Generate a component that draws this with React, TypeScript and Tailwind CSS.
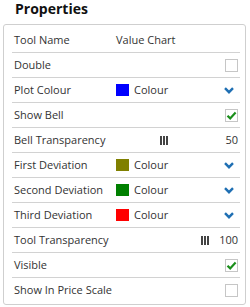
import React from "react";

type Row =
  | { kind: "text"; label: string; value: string }
  | { kind: "check"; label: string; checked: boolean }
  | { kind: "colour"; label: string; colour: string }
  | { kind: "slider"; label: string; value: number };

const rows: Row[] = [
  { kind: "text", label: "Tool Name", value: "Value Chart" },
  { kind: "check", label: "Double", checked: false },
  { kind: "colour", label: "Plot Colour", colour: "#0000ff" },
  { kind: "check", label: "Show Bell", checked: true },
  { kind: "slider", label: "Bell Transparency", value: 50 },
  { kind: "colour", label: "First Deviation", colour: "#808000" },
  { kind: "colour", label: "Second Deviation", colour: "#008000" },
  { kind: "colour", label: "Third Deviation", colour: "#ff0000" },
  { kind: "slider", label: "Tool Transparency", value: 100 },
  { kind: "check", label: "Visible", checked: true },
  { kind: "check", label: "Show In Price Scale", checked: false },
];

function Checkbox({ checked }: { checked: boolean }) {
  return (
    <div className="ml-auto mr-[2px] w-[13px] h-[13px] border border-[#c6c6c6] bg-white flex items-center justify-center">
      {checked && (
        <svg width="11" height="11" viewBox="0 0 11 11">
          <path d="M1.5 5.8 L4.2 8.4 L9.6 2.6" fill="none" stroke="#1b8f1b" strokeWidth="2.2" />
        </svg>
      )}
    </div>
  );
}

function Chevron() {
  return (
    <svg className="ml-auto mr-[6px]" width="10" height="7" viewBox="0 0 10 7">
      <path d="M1 1.2 L5 5.2 L9 1.2" fill="none" stroke="#1f6fb3" strokeWidth="2.4" />
    </svg>
  );
}

function Handle() {
  return (
    <div className="flex gap-[1px] h-[9px]">
      <span className="w-[2px] bg-[#444]" />
      <span className="w-[2px] bg-[#444]" />
      <span className="w-[2px] bg-[#444]" />
    </div>
  );
}

function Value({ row }: { row: Row }) {
  if (row.kind === "text") return <span>{row.value}</span>;
  if (row.kind === "check") return <Checkbox checked={row.checked} />;
  if (row.kind === "colour")
    return (
      <>
        <span className="w-[13px] h-[12px]" style={{ backgroundColor: row.colour }} />
        <span className="ml-[5px]">Colour</span>
        <Chevron />
      </>
    );
  return (
    <>
      <div className="relative ml-[3px] w-[82px] h-[9px]">
        <div className="absolute top-0" style={{ left: `${row.value}%` }}>
          <Handle />
        </div>
      </div>
      <span className="ml-auto mr-[2px]">{row.value}</span>
    </>
  );
}

export default function App() {
  return (
    <div className="w-[250px] h-[307px] bg-white font-['Open_Sans',sans-serif] text-[#333]">
      <h2 className="pl-[15px] text-[14px] leading-[18px] font-bold text-[#111]">Properties</h2>
      <div className="mt-[6px] ml-[3px] w-[243px] border border-[#cfcfcf] rounded-[3px] pl-[8px] pr-[5px] pt-[3px] pb-[1px]">
        {rows.map((row, i) => (
          <div
            key={row.label}
            className={`flex items-center h-[25px] pl-[2px] text-[11px] whitespace-nowrap ${
              i < rows.length - 1 ? "border-b border-[#d2d2d2]" : ""
            }`}
          >
            <span className="w-[102px] shrink-0">{row.label}</span>
            <div className="flex-1 flex items-center">
              <Value row={row} />
            </div>
          </div>
        ))}
      </div>
    </div>
  );
}
